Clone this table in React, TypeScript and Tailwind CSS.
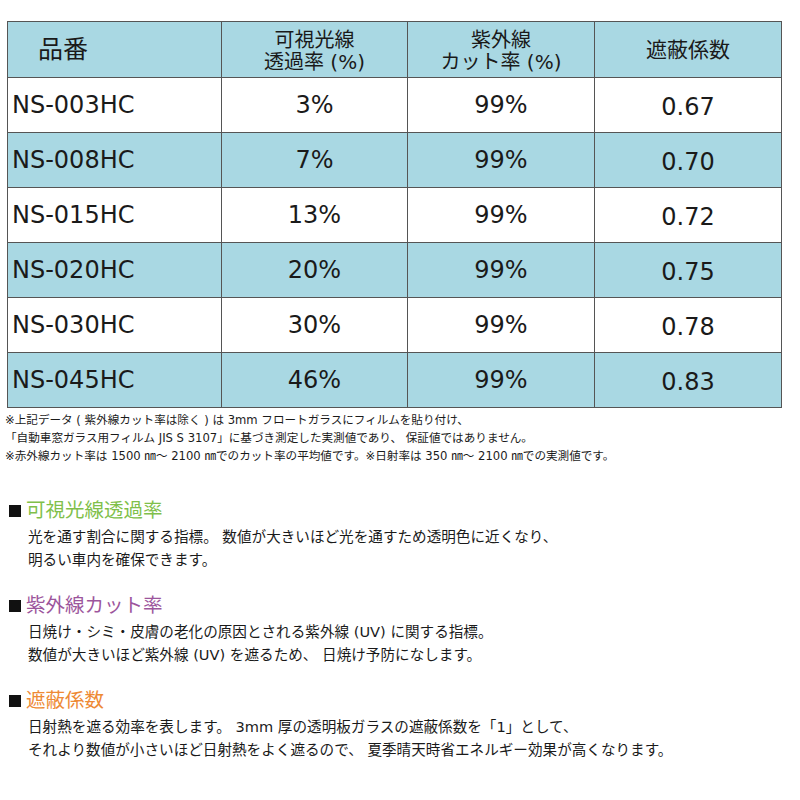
import React from "react";

const rows = [
  { id: "NS-003HC", vlt: "3%", uv: "99%", sc: "0.67", blue: false },
  { id: "NS-008HC", vlt: "7%", uv: "99%", sc: "0.70", blue: true },
  { id: "NS-015HC", vlt: "13%", uv: "99%", sc: "0.72", blue: false },
  { id: "NS-020HC", vlt: "20%", uv: "99%", sc: "0.75", blue: true },
  { id: "NS-030HC", vlt: "30%", uv: "99%", sc: "0.78", blue: false },
  { id: "NS-045HC", vlt: "46%", uv: "99%", sc: "0.83", blue: true },
];

const font = { fontFamily: '"DejaVu Sans", "Noto Sans CJK JP", sans-serif' };

function Section({ color, title, lines }: { color: string; title: string; lines: string[] }) {
  return (
    <div>
      <div className="flex items-center h-[24px]">
        <div className="w-[12px] h-[12px] bg-[#111] ml-[9px] mr-[5px]" />
        <span className={`text-[19.5px] leading-[24px] ${color}`}>{title}</span>
      </div>
      <div className="pl-[28px] mt-[3px] text-[14.6px] leading-[22.5px] text-[#1a1a1a]">
        {lines.map((l, i) => (
          <div key={i}>{l}</div>
        ))}
      </div>
    </div>
  );
}

export default function App() {
  return (
    <div className="w-[800px] h-[800px] bg-white pt-[21px] pl-[7px]" style={font}>
      <table className="border-collapse w-[775px] text-[#1a1a1a]">
        <colgroup>
          <col className="w-[214px]" />
          <col className="w-[186px]" />
          <col className="w-[187px]" />
          <col className="w-[187px]" />
        </colgroup>
        <thead>
          <tr className="bg-[#a9d8e3] h-[56px]">
            <th className="border border-[#555] text-left pl-[30px] font-normal text-[25px] leading-[28px]">品番</th>
            <th className="border border-[#555] font-normal text-[20px] leading-[22px] pt-[2px]">
              可視光線
              <br />
              透過率 (%)
            </th>
            <th className="border border-[#555] font-normal text-[20px] leading-[22px] pt-[2px]">
              紫外線
              <br />
              カット率 (%)
            </th>
            <th className="border border-[#555] font-normal text-[21px] leading-[24px]">遮蔽係数</th>
          </tr>
        </thead>
        <tbody>
          {rows.map((r) => (
            <tr key={r.id} className={`h-[55px] ${r.blue ? "bg-[#a9d8e3]" : "bg-white"}`}>
              <td className="border border-[#555] text-left pl-[4px] text-[24px] leading-[28px]">{r.id}</td>
              <td className="border border-[#555] text-center text-[24px] leading-[28px]">{r.vlt}</td>
              <td className="border border-[#555] text-center text-[24px] leading-[28px]">{r.uv}</td>
              <td className="border border-[#555] text-center text-[24px] leading-[28px] pt-[4px]">{r.sc}</td>
            </tr>
          ))}
        </tbody>
      </table>
      <div className="mt-[3px] text-[11.6px] leading-[18px] text-[#1a1a1a] -ml-[2px]">
        <div>※上記データ ( 紫外線カット率は除く ) は 3mm フロートガラスにフィルムを貼り付け、</div>
        <div>「自動車窓ガラス用フィルム JIS S 3107」に基づき測定した実測値であり、 保証値ではありません。</div>
        <div>※赤外線カット率は 1500 ㎚～ 2100 ㎚でのカット率の平均値です。※日射率は 350 ㎚～ 2100 ㎚での実測値です。</div>
      </div>
      <div className="-ml-[7px] mt-[34px] flex flex-col gap-[23px]">
        <Section
          color="text-[#80bf4a]"
          title="可視光線透過率"
          lines={[
            "光を通す割合に関する指標。 数値が大きいほど光を通すため透明色に近くなり、",
            "明るい車内を確保できます。",
          ]}
        />
        <Section
          color="text-[#9c559c]"
          title="紫外線カット率"
          lines={[
            "日焼け・シミ・皮膚の老化の原因とされる紫外線 (UV) に関する指標。",
            "数値が大きいほど紫外線 (UV) を遮るため、 日焼け予防になします。",
          ]}
        />
        <Section
          color="text-[#ee8a35]"
          title="遮蔽係数"
          lines={[
            "日射熱を遮る効率を表します。 3mm 厚の透明板ガラスの遮蔽係数を「1」として、",
            "それより数値が小さいほど日射熱をよく遮るので、 夏季晴天時省エネルギー効果が高くなります。",
          ]}
        />
      </div>
    </div>
  );
}
